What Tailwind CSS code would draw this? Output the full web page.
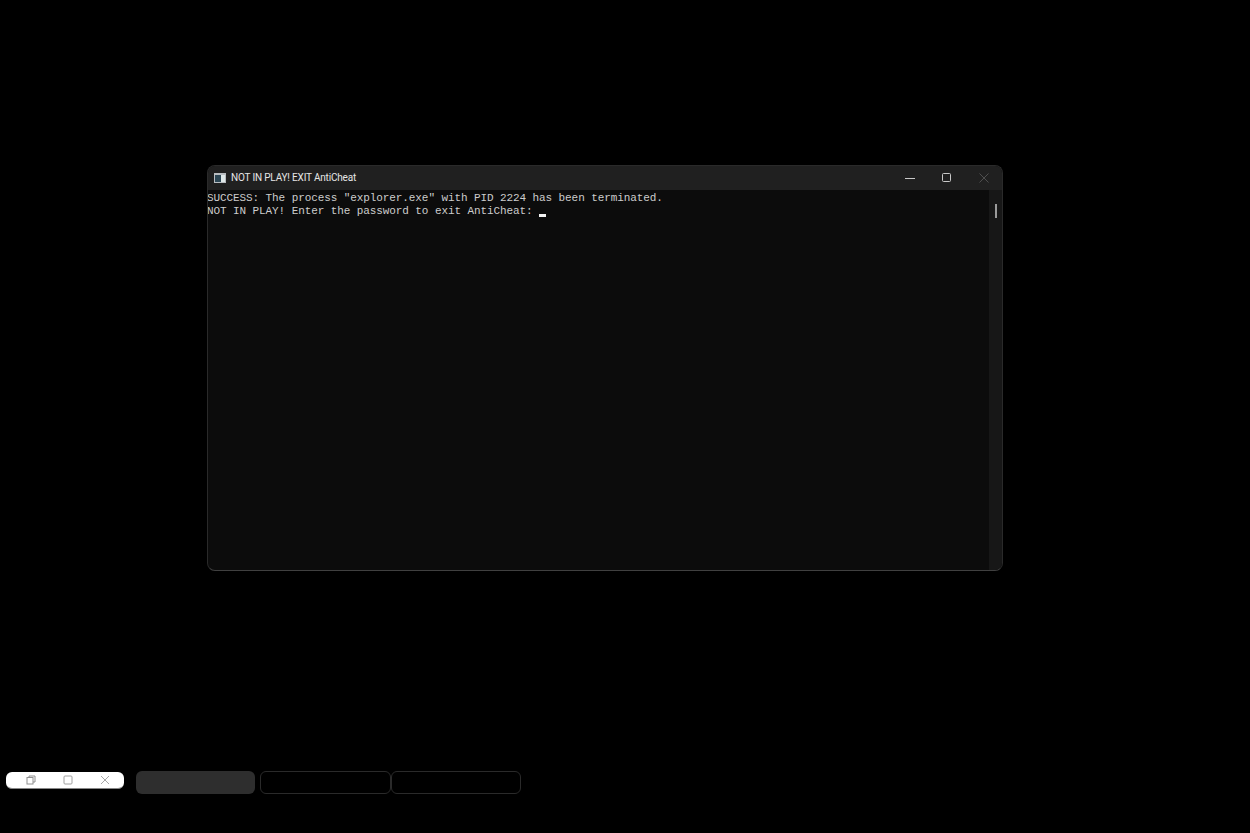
<!doctype html>
<html lang="en">
<head>
  <meta charset="UTF-8">
  <script src="https://cdn.jsdelivr.net/npm/@tailwindcss/browser@4"></script>
  <title>NOT IN PLAY! EXIT AntiCheat</title>
</head>
<body class="bg-black h-[833px] w-[1250px] overflow-hidden flex flex-col">
  <!-- console window -->
  <div class="ml-[207px] mt-[165px] w-[796px] h-[406px] flex flex-col rounded-[8px] border border-[#2a2a2a] border-b-[#404040] overflow-hidden bg-[#0c0c0c]">
    <div class="h-[24px] shrink-0 bg-[#202020] flex items-center">
      <svg class="ml-[6px]" width="12" height="10" viewBox="0 0 12 10">
        <rect width="12" height="10" fill="#b8bcc0"/>
        <rect x="1" y="2" width="6" height="7" fill="#2c4654"/>
        <rect x="7" y="2" width="4" height="7" fill="#dfe8e8"/>
      </svg>
      <span class="ml-[5px] -mt-[1px] text-[10px] text-[#e6e6e6] font-['Roboto',sans-serif] tracking-[-0.18px]">NOT IN PLAY! EXIT AntiCheat</span>
      <div class="ml-auto flex items-center">
        <svg class="mr-[27px]" width="10" height="10" viewBox="0 0 10 10"><path d="M0 5.5H10" stroke="#c8c8c8" stroke-width="1"/></svg>
        <svg class="mr-[27px]" width="10" height="10" viewBox="0 0 10 10"><rect x="0.5" y="0.5" width="8" height="8" rx="1" fill="none" stroke="#c8c8c8" stroke-width="1"/></svg>
        <svg class="mr-[13px]" width="10" height="10" viewBox="0 0 10 10"><path d="M0.5 0.5L9.5 9.5M9.5 0.5L0.5 9.5" stroke="#4e4e4e" stroke-width="1"/></svg>
      </div>
    </div>
    <div class="flex-1 flex min-h-0">
      <div class="flex-1 -ml-[1px] pt-[2px] font-['Liberation_Mono',monospace] text-[11px] leading-[13px] tracking-[-0.09px] text-[#cccccc]">
        <div class="whitespace-pre">SUCCESS: The process "explorer.exe" with PID 2224 has been terminated.</div>
        <div class="flex items-end whitespace-pre">NOT IN PLAY! Enter the password to exit AntiCheat: <span class="w-[7px] h-[3px] bg-[#f2f2f2] mb-[1px]"></span></div>
      </div>
      <div class="w-[13px] bg-[#171717] shrink-0">
        <div class="ml-[6px] mt-[14px] w-[2px] h-[14px] bg-[#9a9a9a]"></div>
      </div>
    </div>
  </div>

  <!-- bottom strip -->
  <div class="mt-[200px] ml-[6px] flex items-start">
    <div class="mt-[1px] w-[118px] h-[17px] bg-white rounded-[6px] border-b border-[#888] flex items-center">
      <svg class="ml-[20px]" width="10" height="10" viewBox="0 0 10 10" fill="none" stroke="#909090"><rect x="1" y="2.5" width="6" height="6.5"/><path d="M3 2.5V1H9V7H7"/></svg>
      <svg class="ml-[27px]" width="10" height="10" viewBox="0 0 10 10" fill="none" stroke="#a0a0a0"><rect x="1" y="1" width="8" height="8" rx="1"/></svg>
      <svg class="ml-[27px]" width="10" height="10" viewBox="0 0 10 10" fill="none" stroke="#a8a8a8"><path d="M1 1L9 9M9 1L1 9"/></svg>
    </div>
    <div class="ml-[12px] w-[119px] h-[23px] rounded-[6px] bg-[#2e2e2e]"></div>
    <div class="ml-[5px] w-[131px] h-[23px] rounded-[6px] border border-[#2a2a2a]"></div>
    <div class="w-[130px] h-[23px] rounded-[6px] border border-[#2a2a2a]"></div>
  </div>
</body>
</html>
